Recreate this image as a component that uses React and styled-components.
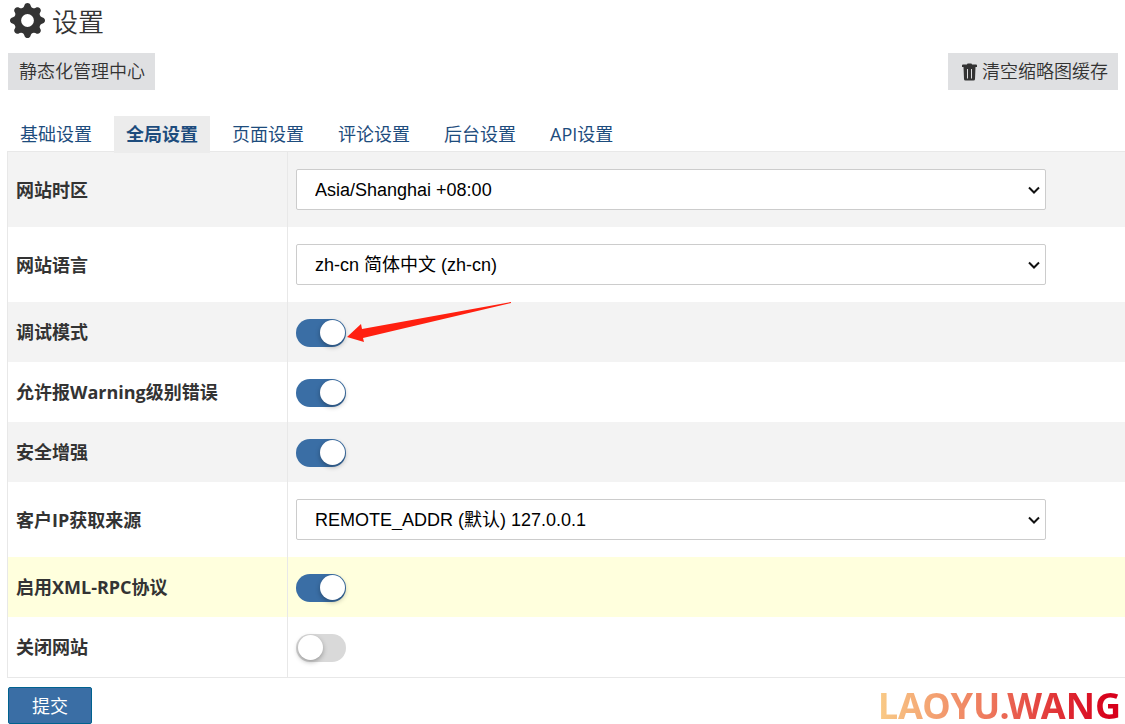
import React, { useState } from 'react';
import styled, { createGlobalStyle } from 'styled-components';
import { BsGearFill } from 'react-icons/bs';

const GlobalStyle = createGlobalStyle`
  *, *::before, *::after {
    box-sizing: border-box;
  }

  body {
    margin: 0;
    background: #fff;
    color: #333;
    font-family: "Open Sans", "Noto Sans CJK SC", sans-serif;
    font-size: 18px;
    line-height: 24px;
  }
`;

const Page = styled.main`
  padding-left: 7px;
`;

const Header = styled.header`
  display: flex;
  align-items: center;
  gap: 7px;
  height: 45px;
  padding: 0 3px 4px;

  svg {
    width: 35px;
    height: 35px;
  }
`;

const Title = styled.h1`
  margin: 0;
  padding-top: 2px;
  font-size: 26px;
  font-weight: 350;
  line-height: 36px;
`;

const Toolbar = styled.div`
  display: flex;
  justify-content: space-between;
  padding: 8px 7px 26px 1px;
`;

const ToolButton = styled.button`
  display: flex;
  align-items: center;
  gap: 4px;
  height: 37px;
  padding: 0 10px 2px 11px;
  border: 0;
  background: #dfe0e2;
  color: #333;
  font: inherit;
  font-weight: 350;
  white-space: nowrap;
  cursor: pointer;

  svg {
    width: 19px;
    height: 20px;
    padding: 2px 0 0 2px;
  }
`;

const Tabs = styled.nav`
  display: flex;
  gap: 10px;
  position: relative;
  margin-bottom: -2px;
  padding-left: 1px;
`;

const Tab = styled.a`
  height: 37px;
  padding: 0 12px;
  background: ${({ $active }) => ($active ? '#ececec' : 'transparent')};
  color: #1d4c7d;
  font-weight: ${({ $active }) => ($active ? 700 : 400)};
  line-height: 37px;
  text-decoration: none;
  white-space: nowrap;
`;

const SettingsTable = styled.table`
  width: 100%;
  border: 1px solid #e8e8e8;
  border-right: 0;
  border-spacing: 0;
`;

const NameCell = styled.th`
  width: 280px;
  padding: 0 8px;
  border-right: 1px solid #e8e8e8;
  font-weight: 700;
  text-align: left;
`;

const ValueCell = styled.td`
  padding: 0 8px;
`;

const Row = styled.tr`
  height: ${({ $tall }) => ($tall ? 75 : 60)}px;
  background: ${({ $highlight }) => ($highlight ? '#ffffdd' : '#fff')};

  &:nth-child(odd) {
    background: ${({ $highlight }) => ($highlight ? '#ffffdd' : '#f3f3f3')};
  }

  ${ValueCell} {
    padding-top: ${({ $tall }) => ($tall ? 0 : 2)}px;
  }
`;

const SelectWrap = styled.div`
  display: grid;
  align-items: center;
  max-width: 750px;

  > * {
    grid-area: 1 / 1;
  }
`;

const Select = styled.select`
  appearance: none;
  width: 100%;
  height: 41px;
  padding: 0 18px;
  border: 1px solid #ccc;
  border-radius: 2px;
  background: #fff;
  color: #000;
  font-family: "Liberation Sans", "Noto Sans CJK SC", sans-serif;
  font-size: 18px;
`;

const Chevron = styled.svg`
  justify-self: end;
  width: 12px;
  height: 8px;
  margin-right: 6px;
  pointer-events: none;
`;

const SwitchWrap = styled.div`
  display: flex;
  position: relative;
  width: 50px;
`;

const Switch = styled.input`
  appearance: none;
  width: 50px;
  height: 28px;
  margin: 0;
  padding: 1px;
  border-radius: 14px;
  background: #d9d9d9;
  cursor: pointer;

  &::before {
    content: "";
    display: block;
    width: 25px;
    height: 25px;
    margin-left: 1px;
    border-radius: 50%;
    background: #fff;
    box-shadow: 0 2px 5px rgba(0, 0, 0, 0.3);
  }

  &:checked {
    background: #3a6ea5;
  }

  &:checked::before {
    margin-left: 23px;
  }
`;

const Pointer = styled.svg`
  position: absolute;
  left: 50px;
  top: -18px;
  width: 168px;
  height: 44px;
  pointer-events: none;
`;

const Footer = styled.footer`
  display: flex;
  align-items: center;
  justify-content: space-between;
  padding: 9px 4px 0 1px;
`;

const SubmitButton = styled.button`
  height: 37px;
  width: 84px;
  border: 1px solid #00628f;
  border-radius: 2px;
  background: #3a6ea5;
  color: #fff;
  font: inherit;
  cursor: pointer;
`;

const Brand = styled.span`
  background: linear-gradient(90deg, #f9cb87, #ee795d 45%, #d7001b 95%);
  background-clip: text;
  color: transparent;
  font-family: "Noto Sans", sans-serif;
  font-size: 36px;
  font-weight: 700;
  line-height: 36px;
`;

const tabs = ['基础设置', '全局设置', '页面设置', '评论设置', '后台设置', 'API设置'];

const settings = [
  { id: 'timezone', name: '网站时区', option: 'Asia/Shanghai +08:00' },
  { id: 'language', name: '网站语言', option: 'zh-cn 简体中文 (zh-cn)' },
  { id: 'debug', name: '调试模式', on: true, pointer: true },
  { id: 'warning', name: '允许报Warning级别错误', on: true },
  { id: 'security', name: '安全增强', on: true },
  { id: 'ip-source', name: '客户IP获取来源', option: 'REMOTE_ADDR (默认) 127.0.0.1' },
  { id: 'xmlrpc', name: '启用XML-RPC协议', on: true, highlight: true },
  { id: 'close-site', name: '关闭网站', on: false },
];

const TrashIcon = () => (
  <svg viewBox="0 0 17 18" fill="currentColor" aria-hidden="true">
    <path d="M6 1.5 Q6 0.5 7 0.5 H10 Q11 0.5 11 1.5 H15 Q16 1.5 16 2.5 V4 H1 V2.5 Q1 1.5 2 1.5 Z" />
    <path
      fillRule="evenodd"
      d="M2.5 4 H14.5 L14 16 Q14 17.5 12.5 17.5 H4.5 Q3 17.5 3 16 Z M6 6 V15.5 H7 V6 Z M10 6 V15.5 H11 V6 Z"
    />
  </svg>
);

const SettingRow = ({ id, name, option, on, pointer, highlight }) => (
  <Row $tall={Boolean(option)} $highlight={highlight}>
    <NameCell scope="row">
      <label htmlFor={id}>{name}</label>
    </NameCell>
    <ValueCell>
      {option ? (
        <SelectWrap>
          <Select id={id}>
            <option>{option}</option>
          </Select>
          <Chevron viewBox="0 0 12 8" aria-hidden="true">
            <path d="M1 1.5 L6 6.5 L11 1.5" fill="none" stroke="#111" strokeWidth="2" />
          </Chevron>
        </SelectWrap>
      ) : (
        <SwitchWrap>
          <Switch id={id} type="checkbox" role="switch" defaultChecked={on} />
          {pointer && (
            <Pointer viewBox="0 0 168 44" aria-hidden="true">
              <path d="M1 36 L15 23 L16 28 L165 1 L165 2 L17 37 L18 41 Z" fill="#ff2010" />
            </Pointer>
          )}
        </SwitchWrap>
      )}
    </ValueCell>
  </Row>
);

const App = () => {
  const [activeTab, setActiveTab] = useState('全局设置');

  return (
    <>
      <GlobalStyle />
      <Page>
        <Header>
          <BsGearFill />
          <Title>设置</Title>
        </Header>
        <Toolbar>
          <ToolButton type="button">静态化管理中心</ToolButton>
          <ToolButton type="button">
            <TrashIcon />
            清空缩略图缓存
          </ToolButton>
        </Toolbar>
        <Tabs>
          {tabs.map((tab) => (
            <Tab
              key={tab}
              href={`#${tab}`}
              $active={tab === activeTab}
              onClick={() => setActiveTab(tab)}
            >
              {tab}
            </Tab>
          ))}
        </Tabs>
        <SettingsTable>
          <tbody>
            {settings.map((setting) => (
              <SettingRow key={setting.id} {...setting} />
            ))}
          </tbody>
        </SettingsTable>
        <Footer>
          <SubmitButton type="submit">提交</SubmitButton>
          <Brand>LAOYU.WANG</Brand>
        </Footer>
      </Page>
    </>
  );
};

export default App;
